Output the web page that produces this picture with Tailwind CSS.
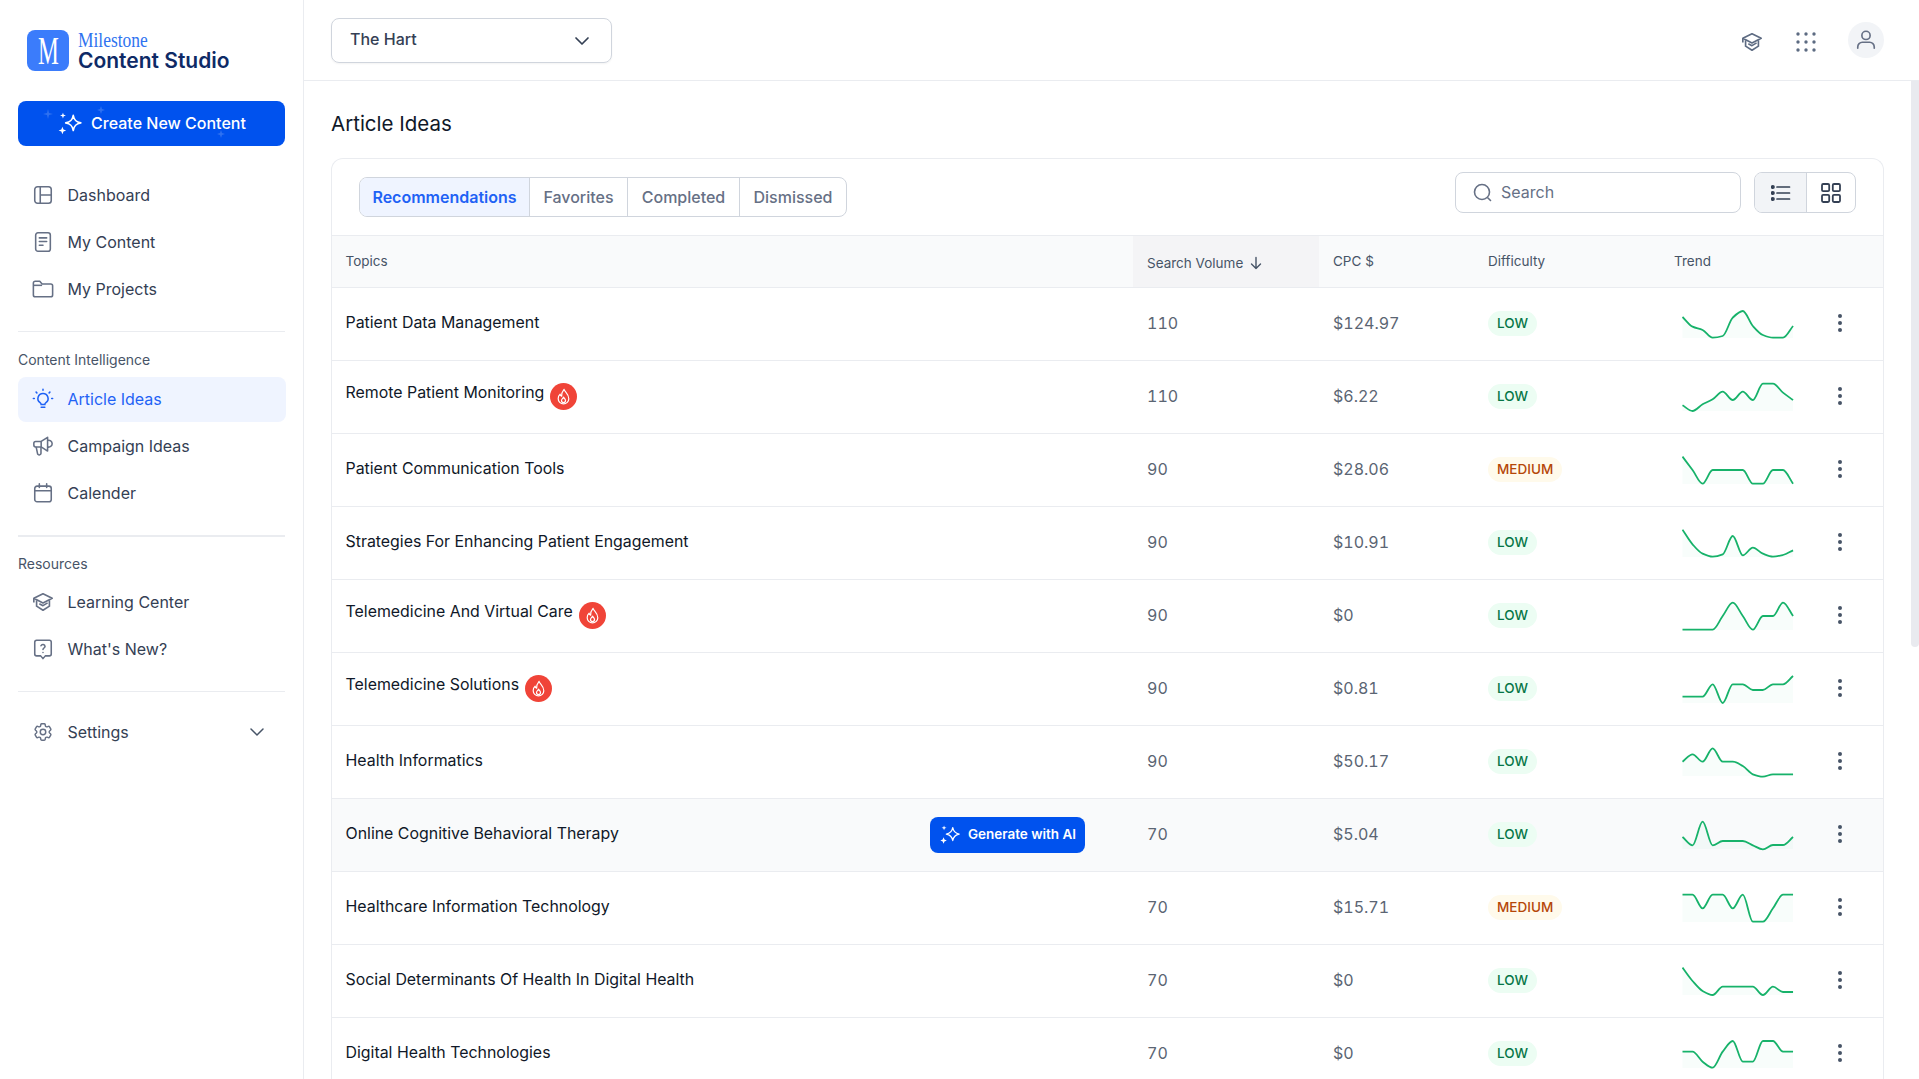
<!DOCTYPE html>
<html lang="en">
<head>
  <meta charset="UTF-8" />
  <title>Article Ideas | Content Studio</title>
  <script src="https://cdn.jsdelivr.net/npm/@tailwindcss/browser@4"></script>
</head>
<body class="flex h-screen overflow-hidden bg-white font-[Inter,sans-serif] text-[#101828]">

  <!-- sidebar -->
  <aside class="w-[304px] shrink-0 border-r border-[#eaecf0] pl-[18px] pr-[18px] pt-[30px]">
    <div class="flex h-[41px] items-center gap-[10px] pl-[9px]">
      <div class="flex h-[41px] w-[42px] items-center justify-center rounded-[8px] bg-[#3b7cfb] font-['Liberation_Serif',serif] text-[39px] leading-[41px] text-white"><span class="inline-block scale-x-[0.6]">M</span></div>
      <div class="-ml-[1px] flex flex-col pt-[4px]">
        <span class="h-[16px] origin-left scale-x-[0.83] font-['Liberation_Serif',serif] text-[21px] leading-[16px] text-[#2f73f0]">Milestone</span>
        <span class="text-[21px] font-semibold leading-[25px] text-[#0e2a66]">Content Studio</span>
      </div>
    </div>

    <button class="relative mt-[30px] flex h-[45px] w-[267px] items-center justify-center gap-[8px] rounded-[8px] bg-[#0052ee] text-[16px] font-medium text-white">
      <svg class="absolute left-0 top-0" width="267" height="45" fill="#ffffff" fill-opacity="0.18"><path d="M30 8l1 4 4 1-4 1-1 4-1-4-4-1 4-1z" /><path d="M83 5l1 3 3 1-3 1-1 3-1-3-3-1 3-1z" /><path d="M203 29l1 3 3 1-3 1-1 3-1-3-3-1 3-1z" /></svg>
      <svg class="relative" width="26" height="26" viewBox="0 0 24 24" fill="none"><path d="M15 4c.8 4.500 2.500 6.200 7 7-4.500.8-6.200 2.500-7 7-.8-4.500-2.500-6.200-7-7 4.500-.8 6.200-2.500 7-7z" stroke="#fff" stroke-width="1.500" stroke-linejoin="round" /><path d="M5.500 1.500l.7 2 2 .7-2 .7-.7 2-.7-2-2-.7 2-.7zM5 14.500l1 2.500 2.500 1-2.500 1-1 2.500-1-2.500-2.500-1 2.500-1z" fill="#fff" /></svg>
      <span class="relative -mt-[1px]">Create New Content</span>
    </button>

    <nav class="mt-[26px] flex flex-col gap-[2px] text-[16px] text-[#344054]">
      <a class="flex h-[45px] items-center gap-[13.5px] pl-[14px]">
        <svg class="h-[22px] w-[22px]" viewBox="0 0 24 24" fill="none" stroke="#667085" stroke-width="1.700"><rect x="3" y="3" width="18" height="18" rx="3" /><path d="M9 3v18M9 12h12" /></svg>
        Dashboard
      </a>
      <a class="flex h-[45px] items-center gap-[13.5px] pl-[14px]">
        <svg class="h-[22px] w-[22px]" viewBox="0 0 24 24" fill="none" stroke="#667085" stroke-width="1.700" stroke-linecap="round"><rect x="4" y="2" width="16" height="20" rx="2.500" /><path d="M8 7.500h8M8 11.500h8M8 15.500h4" /></svg>
        My Content
      </a>
      <a class="flex h-[45px] items-center gap-[13.5px] pl-[14px]">
        <svg class="h-[22px] w-[22px]" viewBox="0 0 24 24" fill="none" stroke="#667085" stroke-width="1.700" stroke-linejoin="round"><path d="M1.500 5.500a2 2 0 0 1 2-2h5l2.500 3h9.500a2 2 0 0 1 2 2v10a2 2 0 0 1-2 2h-17a2 2 0 0 1-2-2z" /><path d="M1.500 8h9.500" /></svg>
        My Projects
      </a>
    </nav>

    <div class="mt-[20px] h-px bg-[#eaecf0]"></div>
    <p class="mt-[18px] text-[14px] leading-[20px] text-[#475467]">Content Intelligence</p>

    <nav class="mt-[7px] flex flex-col gap-[2px] text-[16px] text-[#344054]">
      <a class="flex h-[45px] w-[268px] items-center gap-[13.5px] rounded-[8px] bg-[#eff4ff] pb-[2px] pl-[14px] text-[#1f62f5]">
        <svg class="h-[22px] w-[22px]" viewBox="0 0 24 24" fill="none" stroke="#1f62f5" stroke-width="1.700" stroke-linecap="round"><path d="M12 6a5.500 5.500 0 0 0-3.200 10c.7.500 1.200 1 1.200 2h4c0-1 .5-1.500 1.200-2A5.500 5.500 0 0 0 12 6z" /><path d="M10 21h4M12 1.500v1M4.500 4.500l.8.8M19.500 4.500l-.8.8M1.500 11.500h1M21.500 11.500h1" /></svg>
        Article Ideas
      </a>
      <a class="flex h-[45px] items-center gap-[13.5px] pb-[2px] pl-[14px]">
        <svg class="h-[22px] w-[22px]" viewBox="0 0 24 24" fill="none" stroke="#667085" stroke-width="1.700" stroke-linejoin="round"><path d="M2 9a2 2 0 0 1 2-2h6l7-4.500v15L10 13H4a2 2 0 0 1-2-2z" /><path d="M10 7v6M17 6a3.800 3.800 0 0 1 5 3.500 3.800 3.800 0 0 1-5 3.500M4.500 13l1.500 7a1.900 1.900 0 0 0 3.800-.3V13" /></svg>
        Campaign Ideas
      </a>
      <a class="flex h-[45px] items-center gap-[13.5px] pb-[2px] pl-[14px]">
        <svg class="h-[22px] w-[22px]" viewBox="0 0 24 24" fill="none" stroke="#667085" stroke-width="1.700" stroke-linecap="round"><rect x="3" y="4.500" width="18" height="17" rx="2.500" /><path d="M3 9.500h18M8 2v4M16 2v4" /></svg>
        Calender
      </a>
    </nav>

    <div class="mt-[19px] h-[2px] bg-[#eaecf0]"></div>
    <p class="mt-[17px] text-[14px] leading-[20px] text-[#475467]">Resources</p>

    <nav class="mt-[6px] flex flex-col gap-[2px] text-[16px] text-[#344054]">
      <a class="flex h-[45px] items-center gap-[13.5px] pb-[2px] pl-[14px]">
        <svg class="h-[22px] w-[22px]" viewBox="0 0 24 24" fill="none" stroke="#667085" stroke-width="1.800" stroke-linejoin="round"><path d="M2 8l10-5 10 5-10 5z" /><path d="M5 10v6.500l7 4.500 7-4.500V10M2 8v4.500M8 14l4 2 5-3" /></svg>
        Learning Center
      </a>
      <a class="flex h-[45px] items-center gap-[13.5px] pb-[2px] pl-[14px]">
        <svg class="h-[22px] w-[22px]" viewBox="0 0 24 24" fill="none" stroke="#667085" stroke-width="1.700" stroke-linecap="round" stroke-linejoin="round"><path d="M5 2.500h14a2 2 0 0 1 2 2v13a2 2 0 0 1-2 2h-4.500L12 22.500l-2.500-3H5a2 2 0 0 1-2-2v-13a2 2 0 0 1 2-2z" /><path d="M9.800 8.500a2.300 2.300 0 0 1 4.400.7c0 1.500-2.200 1.900-2.200 3.300M12 15.800v.1" /></svg>
        What's New?
      </a>
    </nav>

    <div class="mt-[19px] h-px bg-[#eaecf0]"></div>

    <a class="mt-[18px] flex h-[45px] items-center gap-[13.5px] pb-[1px] pl-[14px] pr-[20px] text-[16px] text-[#344054]">
      <svg class="h-[22px] w-[22px]" viewBox="0 0 24 24" fill="none" stroke="#667085" stroke-width="1.600"><path d="M9.594 3.940c.09-.542.56-.94 1.110-.94h2.593c.55 0 1.020.398 1.110.94l.213 1.281c.063.374.313.686.645.870.074.040.147.083.22.127.325.196.72.257 1.075.124l1.217-.456a1.125 1.125 0 0 1 1.370.490l1.296 2.247a1.125 1.125 0 0 1-.26 1.431l-1.003.827c-.293.241-.438.613-.43.992a7.723 7.723 0 0 1 0 .255c-.008.378.137.75.43.991l1.004.827c.424.35.534.955.26 1.430l-1.298 2.247a1.125 1.125 0 0 1-1.369.491l-1.217-.456c-.355-.133-.75-.072-1.076.124a6.470 6.470 0 0 1-.22.128c-.331.183-.581.495-.644.869l-.213 1.281c-.09.543-.56.94-1.110.94h-2.594c-.55 0-1.019-.398-1.110-.94l-.213-1.281c-.062-.374-.312-.686-.644-.87a6.520 6.520 0 0 1-.22-.127c-.325-.196-.72-.257-1.076-.124l-1.217.456a1.125 1.125 0 0 1-1.369-.49l-1.297-2.247a1.125 1.125 0 0 1 .26-1.431l1.004-.827c.292-.24.437-.613.43-.991a6.932 6.932 0 0 1 0-.255c.007-.38-.138-.751-.43-.992l-1.004-.827a1.125 1.125 0 0 1-.26-1.430l1.297-2.247a1.125 1.125 0 0 1 1.370-.491l1.216.456c.356.133.751.072 1.076-.124.072-.044.146-.086.22-.128.332-.183.582-.495.644-.869l.214-1.280Z" /><circle cx="12" cy="12" r="3" /></svg>
      <span class="flex-1">Settings</span>
      <svg width="16" height="16" viewBox="0 0 16 16" fill="none" stroke="#475467" stroke-width="1.500" stroke-linecap="round" stroke-linejoin="round"><path d="M2 5l6 6 6-6" /></svg>
    </a>
  </aside>

  <!-- main -->
  <div class="relative flex min-w-0 flex-1 flex-col">
    <header class="flex h-[81px] shrink-0 items-start justify-between border-b border-[#eaecf0] pl-[27px] pr-[53px] pt-[18px]">
      <button class="flex h-[45px] w-[281px] items-center justify-between rounded-[8px] border border-[#d0d5dd] pl-[18px] pr-[21px] text-[16px] font-medium text-[#344054] shadow-xs">
        <span class="-mt-[3px]">The Hart</span>
        <svg width="16" height="16" viewBox="0 0 16 16" fill="none" stroke="#344054" stroke-width="1.700" stroke-linecap="round" stroke-linejoin="round"><path d="M2 5l6 6 6-6" /></svg>
      </button>
      <div class="-mr-[18px] mt-[4px] flex items-center">
        <svg class="mt-[4px] h-[22px] w-[22px]" viewBox="0 0 24 24" fill="none" stroke="#5d6b82" stroke-width="1.800" stroke-linejoin="round"><path d="M2 8l10-5 10 5-10 5z" /><path d="M5 10v6.500l7 4.500 7-4.500V10M2 8v4.500M8 14l4 2 5-3" /></svg>
        <svg class="ml-[32px] mt-[4px]" width="22" height="22" viewBox="0 0 22 22" fill="#5d6b82"><circle cx="3" cy="3" r="1.700" /><circle cx="11" cy="3" r="1.700" /><circle cx="19" cy="3" r="1.700" /><circle cx="3" cy="11" r="1.700" /><circle cx="11" cy="11" r="1.700" /><circle cx="19" cy="11" r="1.700" /><circle cx="3" cy="19" r="1.700" /><circle cx="11" cy="19" r="1.700" /><circle cx="19" cy="19" r="1.700" /></svg>
        <div class="ml-[31px] flex h-[36px] w-[36px] items-center justify-center rounded-full bg-[#f2f4f7]">
          <svg width="22" height="22" viewBox="0 0 24 24" fill="none" stroke="#667085" stroke-width="1.800" stroke-linecap="round"><circle cx="12" cy="7" r="4.500" /><path d="M3 21v-1.500a5 5 0 0 1 5-5h8a5 5 0 0 1 5 5V21" /></svg>
        </div>
      </div>
    </header>

    <main class="min-h-0 flex-1 overflow-hidden pl-[27px] pr-[35px] pt-[29px]">
      <h1 class="text-[20.5px] leading-[28px] text-[#101828]">Article Ideas</h1>

      <section class="mt-[20px] rounded-t-[12px] border border-b-0 border-[#eaecf0]">
        <div class="flex h-[76px] items-start justify-between px-[27px]">
          <div class="mt-[18px] flex h-[40px] overflow-hidden rounded-[8px] border border-[#d0d5dd] text-[16px] font-medium text-[#667085]">
            <button class="w-[169px] bg-[#eff4ff] font-semibold text-[#1f62f5]">Recommendations</button>
            <button class="w-[98px] border-l border-[#d0d5dd]">Favorites</button>
            <button class="w-[112px] border-l border-[#d0d5dd]">Completed</button>
            <button class="w-[107px] border-l border-[#d0d5dd]">Dismissed</button>
          </div>
          <div class="mt-[13px] flex gap-[13px]">
            <div class="flex h-[41px] w-[286px] items-center gap-[9px] rounded-[8px] border border-[#d0d5dd] pl-[17px] text-[16px] text-[#667085]">
              <svg width="19" height="19" viewBox="0 0 19 19" fill="none" stroke="#667085" stroke-width="1.600" stroke-linecap="round"><circle cx="9" cy="9" r="7.500" /><path d="M15 15l2.500 2.500" /></svg>
              <span class="-mt-[2px]">Search</span>
            </div>
            <div class="flex h-[41px] w-[102px] overflow-hidden rounded-[8px] border border-[#d0d5dd]">
              <div class="flex w-[51px] items-center justify-center bg-[#f2f4f7]">
                <svg width="20" height="18" viewBox="0 0 20 18" fill="none" stroke="#344054" stroke-width="1.700" stroke-linecap="round"><path d="M6 3h12.500M6 9h12.500M6 15h12.500" /><circle cx="1.800" cy="3" r="1.200" fill="#344054" /><circle cx="1.800" cy="9" r="1.200" fill="#344054" /><circle cx="1.800" cy="15" r="1.200" fill="#344054" /></svg>
              </div>
              <div class="flex flex-1 items-center justify-center border-l border-[#d0d5dd]">
                <svg width="20" height="20" viewBox="0 0 20 20" fill="none" stroke="#344054" stroke-width="1.800"><rect x="1" y="1" width="7.200" height="7.200" rx="1.200" /><rect x="11.800" y="1" width="7.200" height="7.200" rx="1.200" /><rect x="1" y="11.800" width="7.200" height="7.200" rx="1.200" /><rect x="11.800" y="11.800" width="7.200" height="7.200" rx="1.200" /></svg>
              </div>
            </div>
          </div>
        </div>

        <table class="w-full table-fixed text-left">
          <colgroup>
            <col class="w-[801px]" /><col class="w-[186px]" /><col class="w-[155px]" /><col class="w-[186px]" /><col />
          </colgroup>
          <thead>
            <tr class="h-[52px] border-y border-[#eaecf0] bg-[#f9fafb] text-[13.5px] text-[#475467]">
              <th class="pb-[1px] pl-[13.5px] font-normal">Topics</th>
              <th class="bg-[#f4f4f6] pl-[14px] font-normal"><span class="flex items-center gap-[6px] pt-[3px]">Search Volume <svg width="14" height="14" viewBox="0 0 14 14" fill="none" stroke="#475467" stroke-width="1.400" stroke-linecap="round" stroke-linejoin="round"><path d="M7 1.500v11M2.500 8L7 12.500 11.500 8" /></svg></span></th>
              <th class="pb-[1px] pl-[14px] font-normal">CPC $</th>
              <th class="pb-[1px] pl-[14px] font-normal">Difficulty</th>
              <th class="pb-[1px] pl-[14px] font-normal">Trend</th>
            </tr>
          </thead>
          <tbody class="text-[16px] text-[#5b6573]">
            <tr class="h-[73px] border-b border-[#eaecf0]">
              <td class="pb-[3px] pl-[13.5px] text-[15.9px] text-[#101828]">Patient Data Management</td>
              <td class="pb-[3px] pl-[14px] tabular-nums">110</td>
              <td class="pb-[3px] pl-[14px] tabular-nums">$124.97</td>
              <td class="pb-[2px] pl-[14px]"><span class="inline-block rounded-full bg-[#ecfdf3] px-[9px] text-[13.5px] font-medium leading-[25px] text-[#067647]">LOW</span></td>
              <td class="pl-[22px]"><div class="flex items-center justify-between pr-[41px]"><svg class="spark h-[40px] w-[112px]" data-y="87,116,126,149,144,89,69,114,141,149,149,114"><path class="fill-[#10b981]/3" /><path class="fill-none stroke-[#17b26a] stroke-[1.8]" /></svg><svg class="-mt-[3px]" width="4" height="18" viewBox="0 0 4 18" fill="#475467"><circle cx="2" cy="2" r="2" /><circle cx="2" cy="9" r="2" /><circle cx="2" cy="16" r="2" /></svg></div></td>
            </tr>
            <tr class="h-[73px] border-b border-[#eaecf0]">
              <td class="pl-[13.5px] text-[15.9px] text-[#101828]"><div class="flex items-center gap-[6px]"><span class="mb-[8px]">Remote Patient Monitoring</span><span class="flex h-[27px] w-[27px] items-center justify-center rounded-full bg-[#f04438]"><svg width="17" height="17" viewBox="0 0 16 16" fill="none" stroke="#fff" stroke-width="1.100" stroke-linejoin="round"><path d="M8.500 1.200C9 3.500 13 5.500 13 10a5 5 0 0 1-10 0C3 8 4 6.500 4.800 5.800c.2 1.200.8 1.800 1.500 2C6 5.500 7 3 8.500 1.200z" /><path d="M8 8.500c.3 1 1.900 1.800 1.900 3.300a1.900 1.900 0 0 1-3.800 0c0-1.300 1.600-2 1.900-3.300z" /></svg></span></div></td>
              <td class="pb-[3px] pl-[14px] tabular-nums">110</td>
              <td class="pb-[3px] pl-[14px] tabular-nums">$6.22</td>
              <td class="pb-[2px] pl-[14px]"><span class="inline-block rounded-full bg-[#ecfdf3] px-[9px] text-[13.5px] font-medium leading-[25px] text-[#067647]">LOW</span></td>
              <td class="pl-[22px]"><div class="flex items-center justify-between pr-[41px]"><svg class="spark h-[40px] w-[112px]" data-y="133,150,130,115,92,117,92,117,68,68,95,117"><path class="fill-[#10b981]/3" /><path class="fill-none stroke-[#17b26a] stroke-[1.8]" /></svg><svg class="-mt-[3px]" width="4" height="18" viewBox="0 0 4 18" fill="#475467"><circle cx="2" cy="2" r="2" /><circle cx="2" cy="9" r="2" /><circle cx="2" cy="16" r="2" /></svg></div></td>
            </tr>
            <tr class="h-[73px] border-b border-[#eaecf0]">
              <td class="pb-[3px] pl-[13.5px] text-[15.9px] text-[#101828]">Patient Communication Tools</td>
              <td class="pb-[3px] pl-[14px] tabular-nums">90</td>
              <td class="pb-[3px] pl-[14px] tabular-nums">$28.06</td>
              <td class="pb-[2px] pl-[14px]"><span class="inline-block rounded-full bg-[#fffaeb] px-[9px] text-[13.5px] font-medium leading-[25px] text-[#b54708]">MEDIUM</span></td>
              <td class="pl-[22px]"><div class="flex items-center justify-between pr-[41px]"><svg class="spark h-[40px] w-[112px]" data-y="68,108,149,108,108,108,108,149,149,108,108,149"><path class="fill-[#10b981]/3" /><path class="fill-none stroke-[#17b26a] stroke-[1.8]" /></svg><svg class="-mt-[3px]" width="4" height="18" viewBox="0 0 4 18" fill="#475467"><circle cx="2" cy="2" r="2" /><circle cx="2" cy="9" r="2" /><circle cx="2" cy="16" r="2" /></svg></div></td>
            </tr>
            <tr class="h-[73px] border-b border-[#eaecf0]">
              <td class="pb-[3px] pl-[13.5px] text-[15.9px] text-[#101828]">Strategies For Enhancing Patient Engagement</td>
              <td class="pb-[3px] pl-[14px] tabular-nums">90</td>
              <td class="pb-[3px] pl-[14px] tabular-nums">$10.91</td>
              <td class="pb-[2px] pl-[14px]"><span class="inline-block rounded-full bg-[#ecfdf3] px-[9px] text-[13.5px] font-medium leading-[25px] text-[#067647]">LOW</span></td>
              <td class="pl-[22px]"><div class="flex items-center justify-between pr-[41px]"><svg class="spark h-[40px] w-[112px]" data-y="68,112,140,149,142,87,145,122,140,149,144,130"><path class="fill-[#10b981]/3" /><path class="fill-none stroke-[#17b26a] stroke-[1.8]" /></svg><svg class="-mt-[3px]" width="4" height="18" viewBox="0 0 4 18" fill="#475467"><circle cx="2" cy="2" r="2" /><circle cx="2" cy="9" r="2" /><circle cx="2" cy="16" r="2" /></svg></div></td>
            </tr>
            <tr class="h-[73px] border-b border-[#eaecf0]">
              <td class="pl-[13.5px] text-[15.9px] text-[#101828]"><div class="flex items-center gap-[6px]"><span class="mb-[8px]">Telemedicine And Virtual Care</span><span class="flex h-[27px] w-[27px] items-center justify-center rounded-full bg-[#f04438]"><svg width="17" height="17" viewBox="0 0 16 16" fill="none" stroke="#fff" stroke-width="1.100" stroke-linejoin="round"><path d="M8.500 1.200C9 3.500 13 5.500 13 10a5 5 0 0 1-10 0C3 8 4 6.500 4.800 5.800c.2 1.200.8 1.800 1.500 2C6 5.500 7 3 8.500 1.200z" /><path d="M8 8.500c.3 1 1.900 1.800 1.900 3.300a1.900 1.900 0 0 1-3.800 0c0-1.300 1.600-2 1.900-3.300z" /></svg></span></div></td>
              <td class="pb-[3px] pl-[14px] tabular-nums">90</td>
              <td class="pb-[3px] pl-[14px] tabular-nums">$0</td>
              <td class="pb-[2px] pl-[14px]"><span class="inline-block rounded-full bg-[#ecfdf3] px-[9px] text-[13.5px] font-medium leading-[25px] text-[#067647]">LOW</span></td>
              <td class="pl-[22px]"><div class="flex items-center justify-between pr-[41px]"><svg class="spark h-[40px] w-[112px]" data-y="149,149,149,149,108,68,108,149,108,108,68,108"><path class="fill-[#10b981]/3" /><path class="fill-none stroke-[#17b26a] stroke-[1.8]" /></svg><svg class="-mt-[3px]" width="4" height="18" viewBox="0 0 4 18" fill="#475467"><circle cx="2" cy="2" r="2" /><circle cx="2" cy="9" r="2" /><circle cx="2" cy="16" r="2" /></svg></div></td>
            </tr>
            <tr class="h-[73px] border-b border-[#eaecf0]">
              <td class="pl-[13.5px] text-[15.9px] text-[#101828]"><div class="flex items-center gap-[6px]"><span class="mb-[8px]">Telemedicine Solutions</span><span class="flex h-[27px] w-[27px] items-center justify-center rounded-full bg-[#f04438]"><svg width="17" height="17" viewBox="0 0 16 16" fill="none" stroke="#fff" stroke-width="1.100" stroke-linejoin="round"><path d="M8.500 1.200C9 3.500 13 5.500 13 10a5 5 0 0 1-10 0C3 8 4 6.500 4.800 5.800c.2 1.200.8 1.800 1.500 2C6 5.500 7 3 8.500 1.200z" /><path d="M8 8.500c.3 1 1.900 1.800 1.900 3.300a1.900 1.900 0 0 1-3.800 0c0-1.300 1.600-2 1.900-3.300z" /></svg></span></div></td>
              <td class="pb-[3px] pl-[14px] tabular-nums">90</td>
              <td class="pb-[3px] pl-[14px] tabular-nums">$0.81</td>
              <td class="pb-[2px] pl-[14px]"><span class="inline-block rounded-full bg-[#ecfdf3] px-[9px] text-[13.5px] font-medium leading-[25px] text-[#067647]">LOW</span></td>
              <td class="pl-[22px]"><div class="flex items-center justify-between pr-[41px]"><svg class="spark h-[40px] w-[112px]" data-y="131,131,131,94,150,94,94,111,111,94,94,69"><path class="fill-[#10b981]/3" /><path class="fill-none stroke-[#17b26a] stroke-[1.8]" /></svg><svg class="-mt-[3px]" width="4" height="18" viewBox="0 0 4 18" fill="#475467"><circle cx="2" cy="2" r="2" /><circle cx="2" cy="9" r="2" /><circle cx="2" cy="16" r="2" /></svg></div></td>
            </tr>
            <tr class="h-[73px] border-b border-[#eaecf0]">
              <td class="pb-[3px] pl-[13.5px] text-[15.9px] text-[#101828]">Health Informatics</td>
              <td class="pb-[3px] pl-[14px] tabular-nums">90</td>
              <td class="pb-[3px] pl-[14px] tabular-nums">$50.17</td>
              <td class="pb-[2px] pl-[14px]"><span class="inline-block rounded-full bg-[#ecfdf3] px-[9px] text-[13.5px] font-medium leading-[25px] text-[#067647]">LOW</span></td>
              <td class="pl-[22px]"><div class="flex items-center justify-between pr-[41px]"><svg class="spark h-[40px] w-[112px]" data-y="107,85,107,67,107,107,120,145,152,145,145,145"><path class="fill-[#10b981]/3" /><path class="fill-none stroke-[#17b26a] stroke-[1.8]" /></svg><svg class="-mt-[3px]" width="4" height="18" viewBox="0 0 4 18" fill="#475467"><circle cx="2" cy="2" r="2" /><circle cx="2" cy="9" r="2" /><circle cx="2" cy="16" r="2" /></svg></div></td>
            </tr>
            <tr class="h-[73px] border-b border-[#eaecf0] bg-[#f9fafb]">
              <td class="pl-[13.5px] pr-[48px] text-[15.9px] text-[#101828]"><div class="flex items-center justify-between"><span class="mb-[3px]">Online Cognitive Behavioral Therapy</span><button class="flex h-[36px] w-[155px] items-center justify-center gap-[7px] rounded-[8px] bg-[#0052ee] text-[13.5px] font-semibold text-white"><svg width="22" height="22" viewBox="0 0 24 24" fill="none"><path d="M15 4c.8 4.500 2.500 6.200 7 7-4.500.8-6.200 2.500-7 7-.8-4.500-2.500-6.200-7-7 4.500-.8 6.200-2.500 7-7z" stroke="#fff" stroke-width="1.400" stroke-linejoin="round" /><path d="M5.500 1.500l.7 2 2 .7-2 .7-.7 2-.7-2-2-.7 2-.7zM5 14.500l1 2.500 2.500 1-2.500 1-1 2.500-1-2.500-2.500-1 2.500-1z" fill="#fff" /></svg><span class="-mt-[2px]">Generate with AI</span></button></div></td>
              <td class="pb-[3px] pl-[14px] tabular-nums">70</td>
              <td class="pb-[3px] pl-[14px] tabular-nums">$5.04</td>
              <td class="pb-[2px] pl-[14px]"><span class="inline-block rounded-full bg-[#ecfdf3] px-[9px] text-[13.5px] font-medium leading-[25px] text-[#067647]">LOW</span></td>
              <td class="pl-[22px]"><div class="flex items-center justify-between pr-[41px]"><svg class="spark h-[40px] w-[112px]" data-y="114,139,68,139,126,126,126,139,151,138,138,114"><path class="fill-[#10b981]/3" /><path class="fill-none stroke-[#17b26a] stroke-[1.8]" /></svg><svg class="-mt-[3px]" width="4" height="18" viewBox="0 0 4 18" fill="#475467"><circle cx="2" cy="2" r="2" /><circle cx="2" cy="9" r="2" /><circle cx="2" cy="16" r="2" /></svg></div></td>
            </tr>
            <tr class="h-[73px] border-b border-[#eaecf0]">
              <td class="pb-[3px] pl-[13.5px] text-[15.9px] text-[#101828]">Healthcare Information Technology</td>
              <td class="pb-[3px] pl-[14px] tabular-nums">70</td>
              <td class="pb-[3px] pl-[14px] tabular-nums">$15.71</td>
              <td class="pb-[2px] pl-[14px]"><span class="inline-block rounded-full bg-[#fffaeb] px-[9px] text-[13.5px] font-medium leading-[25px] text-[#b54708]">MEDIUM</span></td>
              <td class="pl-[22px]"><div class="flex items-center justify-between pr-[41px]"><svg class="spark h-[40px] w-[112px]" data-y="68,68,109,68,68,109,68,149,149,109,68,68"><path class="fill-[#10b981]/3" /><path class="fill-none stroke-[#17b26a] stroke-[1.8]" /></svg><svg class="-mt-[3px]" width="4" height="18" viewBox="0 0 4 18" fill="#475467"><circle cx="2" cy="2" r="2" /><circle cx="2" cy="9" r="2" /><circle cx="2" cy="16" r="2" /></svg></div></td>
            </tr>
            <tr class="h-[73px] border-b border-[#eaecf0]">
              <td class="pb-[3px] pl-[13.5px] text-[15.9px] text-[#101828]">Social Determinants Of Health In Digital Health</td>
              <td class="pb-[3px] pl-[14px] tabular-nums">70</td>
              <td class="pb-[3px] pl-[14px] tabular-nums">$0</td>
              <td class="pb-[2px] pl-[14px]"><span class="inline-block rounded-full bg-[#ecfdf3] px-[9px] text-[13.5px] font-medium leading-[25px] text-[#067647]">LOW</span></td>
              <td class="pl-[22px]"><div class="flex items-center justify-between pr-[41px]"><svg class="spark h-[40px] w-[112px]" data-y="68,108,138,150,125,125,125,125,150,125,141,141"><path class="fill-[#10b981]/3" /><path class="fill-none stroke-[#17b26a] stroke-[1.8]" /></svg><svg class="-mt-[3px]" width="4" height="18" viewBox="0 0 4 18" fill="#475467"><circle cx="2" cy="2" r="2" /><circle cx="2" cy="9" r="2" /><circle cx="2" cy="16" r="2" /></svg></div></td>
            </tr>
            <tr class="h-[73px] border-b border-[#eaecf0]">
              <td class="pb-[3px] pl-[13.5px] text-[15.9px] text-[#101828]">Digital Health Technologies</td>
              <td class="pb-[3px] pl-[14px] tabular-nums">70</td>
              <td class="pb-[3px] pl-[14px] tabular-nums">$0</td>
              <td class="pb-[2px] pl-[14px]"><span class="inline-block rounded-full bg-[#ecfdf3] px-[9px] text-[13.5px] font-medium leading-[25px] text-[#067647]">LOW</span></td>
              <td class="pl-[22px]"><div class="flex items-center justify-between pr-[41px]"><svg class="spark h-[40px] w-[112px]" data-y="101,101,131,149,101,69,131,131,69,69,101,101"><path class="fill-[#10b981]/3" /><path class="fill-none stroke-[#17b26a] stroke-[1.8]" /></svg><svg class="-mt-[3px]" width="4" height="18" viewBox="0 0 4 18" fill="#475467"><circle cx="2" cy="2" r="2" /><circle cx="2" cy="9" r="2" /><circle cx="2" cy="16" r="2" /></svg></div></td>
            </tr>
          </tbody>
        </table>
      </section>
    </main>

    <!-- scrollbar thumb -->
    <div class="absolute right-0 top-[81px] h-[566px] w-[8px] rounded-b-[4px] bg-[#e9eaef]"></div>
  </div>

  <script>
    // monotone curve through the sampled trend points
    document.querySelectorAll(".spark").forEach(function(svg) {
      const ys = svg.dataset.y.split(",").map(v => v / 3 - 16);
      const step = 10.05;
      const slopes = ys.slice(1).map((y, i) => (y - ys[i]) / step);
      const tang = ys.map((y, i) => {
        if (i === 0) return slopes[0];
        if (i === ys.length - 1) return slopes[i - 1];
        const a = slopes[i - 1], b = slopes[i];
        return a * b <= 0 ? 0 : 2 * a * b / (a + b);
      });
      let d = "M0.5 " + ys[0];
      for (let i = 1; i < ys.length; i++) {
        const x0 = 0.5 + (i - 1) * step, x1 = 0.5 + i * step;
        d += " C" + (x0 + step / 3) + " " + (ys[i - 1] + tang[i - 1] * step / 3) + " " + (x1 - step / 3) + " " + (ys[i] - tang[i] * step / 3) + " " + x1 + " " + ys[i];
      }
      const paths = svg.querySelectorAll("path");
      paths[0].setAttribute("d", d + " V34 H0.5 Z");
      paths[1].setAttribute("d", d);
    });
  </script>
</body>
</html>
